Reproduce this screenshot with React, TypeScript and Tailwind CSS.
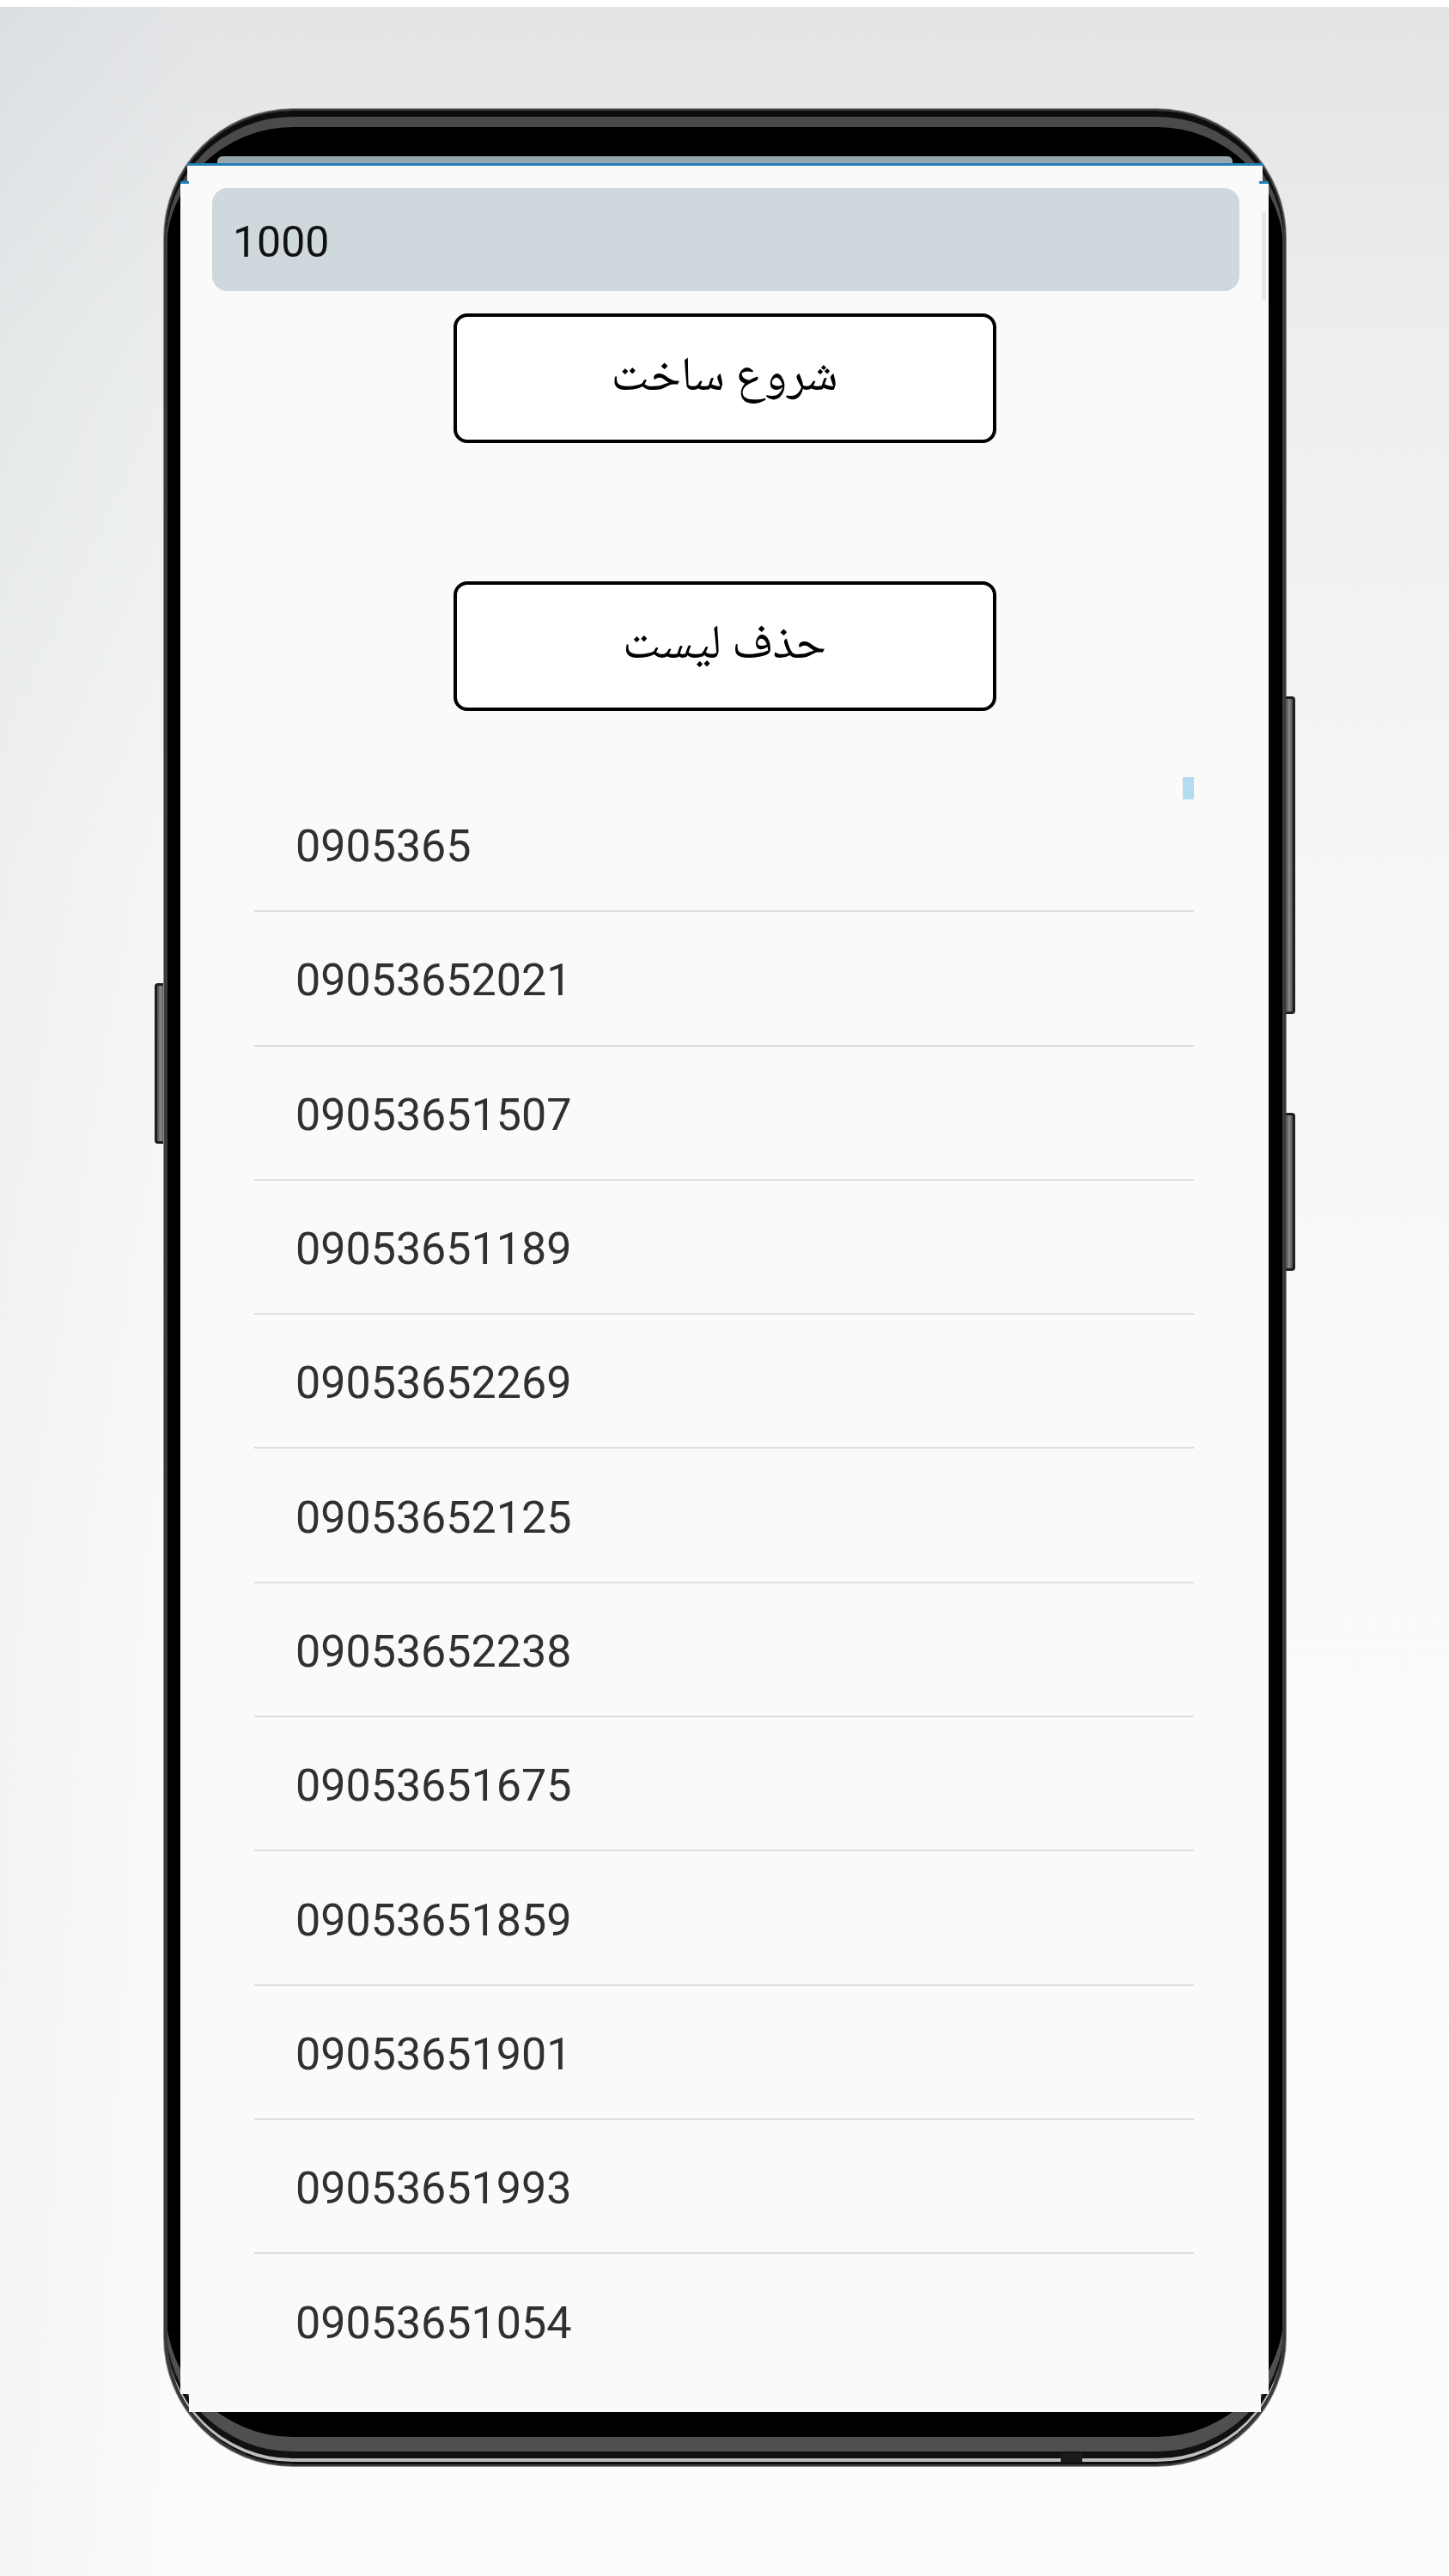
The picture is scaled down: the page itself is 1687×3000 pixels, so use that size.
const numbers = [
  '0905365',
  '09053652021',
  '09053651507',
  '09053651189',
  '09053652269',
  '09053652125',
  '09053652238',
  '09053651675',
  '09053651859',
  '09053651901',
  '09053651993',
  '09053651054',
]

const arabicFont = "font-['Noto_Naskh_Arabic','Noto_Sans_Arabic','DejaVu_Sans',sans-serif]"

function ActionButton({ label }: { label: string }) {
  return (
    <button
      className={`mx-auto flex h-[151px] w-[632px] items-center justify-center rounded-[16px] border-[4px] border-black bg-white pt-[2px] text-[56px] text-black ${arabicFont}`}
      dir="rtl"
    >
      {label}
    </button>
  )
}

function Screen() {
  return (
    <div className="ml-[17px] mr-[18px] flex h-[2577px] flex-col overflow-hidden bg-[#fafafa]">
      {/* blue edges of the cropped app bar */}
      <div className="flex h-[3px] shrink-0">
        <div className="w-[10px] bg-[#1f7fb5]" />
        <div className="flex-1" />
        <div className="w-[11px] bg-[#1f7fb5]" />
      </div>

      {/* count input + faint scroll hint */}
      <div className="mt-[5px] flex h-[120px] shrink-0 items-start pl-[37px] pr-[3px]">
        <div className="flex h-[120px] flex-1 items-center rounded-[18px] bg-[#cfd8dd] pl-[24px] pt-[6px] font-['Roboto',sans-serif] text-[50px] text-[#111]">
          1000
        </div>
        <div className="ml-[26px] mt-[28px] h-[102px] w-[5px] rounded-full bg-[#e4e8eb]" />
      </div>

      <div className="mt-[26px]">
        <ActionButton label="شروع ساخت" />
      </div>
      <div className="mt-[161px]">
        <ActionButton label="حذف لیست" />
      </div>

      {/* generated list */}
      <div className="relative ml-[86px] mr-[87px] mt-[78px]">
        <div className="absolute right-0 top-[-1px] h-[26px] w-[13px] bg-[#b3dcf0]" />
        {numbers.map((n, i) => (
          <div
            key={i}
            className="flex h-[156.3px] items-center border-b-2 border-[#dddddd] pl-[48px] pt-[6px] font-['Roboto',sans-serif] text-[52px] text-[#303030] last:border-b-0"
          >
            {n}
          </div>
        ))}
      </div>
    </div>
  )
}

function SideKey({ side, h }: { side: 'left' | 'right'; h: string }) {
  return (
    <div
      className={`${h} w-[11px] border-y-[3px] border-[#1e1e1e] bg-gradient-to-r from-[#4a4a4a] via-[#8c8c8c] to-[#4a4a4a] ${
        side === 'left' ? 'rounded-l-[4px] border-l-[3px]' : 'rounded-r-[4px] border-r-[3px]'
      }`}
    />
  )
}

function Phone() {
  return (
    <div className="flex h-[2745px] w-[1306px] flex-col rounded-[150px] border-[2px] border-[#3a3a3a] bg-black pt-[53px] shadow-[0_0_0_1px_#8a8a8a,inset_0_7px_0_#0d0d0d,inset_0_19px_0_#4a4a4a,inset_2px_0_0_#3a3a3a,inset_-2px_0_0_#3a3a3a,inset_0_-3px_0_#0d0d0d,inset_0_-7px_0_#bdbdbd,inset_0_-15px_0_#111,inset_0_-32px_0_#4f4f4f]">
      {/* status bar sliver + blue bar edge */}
      <div className="mx-[60px] h-[8px] rounded-t-[6px] bg-[#97a6ae]" />
      <div className="mx-[25px] h-[21px] border-t-[3px] border-[#1f7fb5] bg-[#fafafa]" />
      <Screen />
      <div className="mx-[27px] h-[21px] bg-[#fafafa]" />
      {/* bottom edge notch */}
      <div className="mt-[48px] flex justify-end pr-[235px]">
        <div className="h-[11px] w-[25px] bg-[#1a1a1a]" />
      </div>
    </div>
  )
}

export default function App() {
  return (
    <div className="h-[3000px] w-[1687px] overflow-hidden bg-[#fcfdfe]">
      <div className="h-[8px] bg-white" />
      <div className="h-[2992px] bg-[linear-gradient(90deg,rgba(120,130,140,0.06),rgba(120,130,140,0)_14%),linear-gradient(180deg,#e2e4e6_0px,#eceeef_400px,#f5f6f7_1000px,#f9fafb_1800px,#fbfcfd_3000px)]">
        <div className="flex items-start pl-[180px] pt-[119px]">
          <div className="mt-[1018px]">
            <SideKey side="left" h="h-[187px]" />
          </div>
          <Phone />
          <div className="mt-[684px] flex flex-col gap-[115px]">
            <SideKey side="right" h="h-[370px]" />
            <SideKey side="right" h="h-[184px]" />
          </div>
        </div>
      </div>
    </div>
  )
}
